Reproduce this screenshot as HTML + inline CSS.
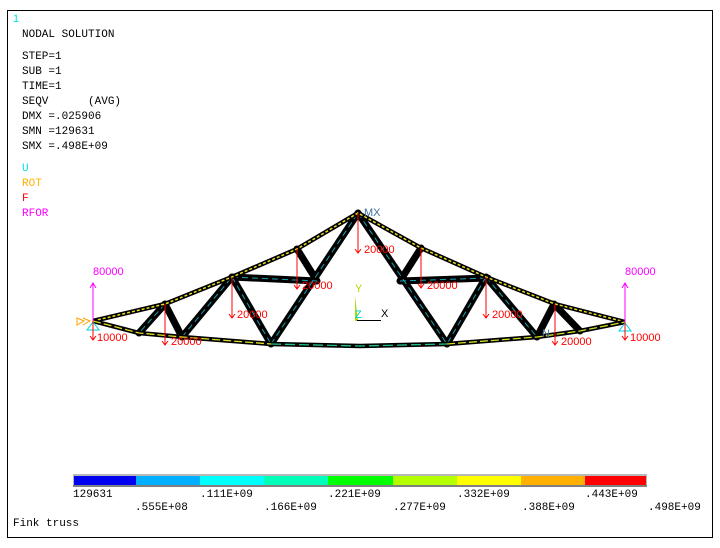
<!DOCTYPE html>
<html><head><meta charset="utf-8"><style>
html,body{margin:0;padding:0;background:#fff;width:720px;height:548px;overflow:hidden}
svg{display:block}
.m{font-family:"Liberation Mono",monospace;font-size:11px;white-space:pre}
.s{font-family:"Liberation Sans",sans-serif;font-size:11px}
</style></head><body>
<svg width="720" height="548" viewBox="0 0 720 548">
<rect x="7.5" y="10.5" width="705" height="527" fill="#fff" stroke="#000" stroke-width="1"/>
<text x="13" y="22" class="s" fill="#00e0e0">1</text>
<g class="m" fill="#000">
<text x="22" y="37">NODAL SOLUTION</text>
<text x="22" y="59">STEP=1</text>
<text x="22" y="74">SUB =1</text>
<text x="22" y="89">TIME=1</text>
<text x="22" y="104" xml:space="preserve">SEQV      (AVG)</text>
<text x="22" y="119">DMX =.025906</text>
<text x="22" y="134">SMN =129631</text>
<text x="22" y="149">SMX =.498E+09</text>
</g>
<text x="22" y="171" class="m" fill="#00e0e0">U</text>
<text x="22" y="186" class="m" fill="#ffb000">ROT</text>
<text x="22" y="201" class="m" fill="#ff0000">F</text>
<text x="22" y="216" class="m" fill="#ff00ff">RFOR</text>

<g stroke="#000" stroke-width="7" stroke-linecap="round" fill="none">
<path d="M165 304L139 333M165 304L182 337M182 337L232 277M232 277L271 344M271 344L358 213M232 277L317 281M297 249L317 281M358 213L447 344M400 281L488 278M421 248L400 281M486 277L447 344M486 277L537 337M537 337L554 304M554 304L580 331"/>
</g>
<g stroke="#1aa0b0" stroke-width="1" stroke-dasharray="6 4" fill="none">
<path d="M165 304L139 333M182 337L232 277M232 277L271 344M271 344L358 213M232 277L317 281M358 213L447 344M400 281L488 278M486 277L447 344M486 277L537 337"/>
</g>
<path d="M93 321L165 304L232 277L297 249L358 213L421 248L486 277L555 304L625 322" stroke="#000" stroke-width="4.5" fill="none"/>
<path d="M93 321L165 304L232 277L297 249L358 213L421 248L486 277L555 304L625 322" stroke="#e8e020" stroke-width="1.5" stroke-dasharray="3 2" fill="none"/>
<path d="M93 321L139 333L182 337L271 344L360 346L447 344L537 337L580 331L625 322" stroke="#000" stroke-width="4.5" fill="none"/>
<path d="M93 321L139 333L182 337L271 344" stroke="#e0e020" stroke-width="1.3" stroke-dasharray="8 3" fill="none"/>
<path d="M271 344L360 346L447 344" stroke="#20c090" stroke-width="1.3" stroke-dasharray="10 4" fill="none"/>
<path d="M447 344L537 337L580 331L625 322" stroke="#d0e020" stroke-width="1.3" stroke-dasharray="8 3" fill="none"/>
<text x="364" y="216" class="s" fill="#4070a0">MX</text>
<text x="542" y="337" class="s" fill="#4070a0">N</text>

<path d="M87 330L93 322L99 330Z" fill="none" stroke="#00d0e0"/>
<path d="M619 331L625 323L631 331Z" fill="none" stroke="#00d0e0"/>
<path d="M77 318L84 321L77 325ZM83 318L90 321L83 325" fill="none" stroke="#ffa000"/>

<g stroke="#ff0000" stroke-width="1" fill="none">
<path d="M93 321V340M90 336L93 340L96 336"/>
<path d="M625 322V340M622 336L625 340L628 336"/>
<path d="M165 304V345M162 341L165 345L168 341"/>
<path d="M232 277V318M229 314L232 318L235 314"/>
<path d="M297 249V289M294 285L297 289L300 285"/>
<path d="M358 213V253M355 249L358 253L361 249"/>
<path d="M421 248V288M418 284L421 288L424 284"/>
<path d="M486 277V318M483 314L486 318L489 314"/>
<path d="M555 304V345M552 341L555 345L558 341"/>
</g>
<g class="s" fill="#ff0000">
<text x="97" y="341">10000</text>
<text x="630" y="341">10000</text>
<text x="171" y="345">20000</text>
<text x="237" y="318">20000</text>
<text x="302" y="289">20000</text>
<text x="364" y="253">20000</text>
<text x="427" y="289">20000</text>
<text x="492" y="318">20000</text>
<text x="561" y="345">20000</text>
</g>
<g stroke="#ff00ff" fill="none">
<path d="M93 321V283M90 288L93 283L96 288"/>
<path d="M625 322V283M622 288L625 283L628 288"/>
</g>
<text x="93" y="275" class="s" fill="#ff00ff">80000</text>
<text x="625" y="275" class="s" fill="#ff00ff">80000</text>

<path d="M355 296V321H358Z" fill="#a0e000"/>
<line x1="357" y1="320.5" x2="381" y2="320.5" stroke="#000"/>
<text x="355" y="292" class="s" fill="#c0d000">Y</text>
<text x="355" y="318" class="s" fill="#00d0d0" font-size="9">Z</text>
<text x="381" y="317" class="s" fill="#000">X</text>

<rect x="73" y="474" width="574" height="13" fill="#b8b8b8"/>
<g>
<rect x="74" y="476" width="62" height="9" fill="#0000f0"/>
<rect x="136" y="476" width="64" height="9" fill="#00b0ff"/>
<rect x="200" y="476" width="64" height="9" fill="#00ffff"/>
<rect x="264" y="476" width="64" height="9" fill="#00ffb8"/>
<rect x="328" y="476" width="65" height="9" fill="#00ff00"/>
<rect x="393" y="476" width="64" height="9" fill="#b4ff00"/>
<rect x="457" y="476" width="64" height="9" fill="#ffff00"/>
<rect x="521" y="476" width="64" height="9" fill="#ffb000"/>
<rect x="585" y="476" width="61" height="9" fill="#ff0000"/>
</g>
<rect x="73" y="485" width="574" height="2" fill="#808080"/>
<g class="m" fill="#000">
<text x="73" y="497">129631</text>
<text x="200" y="497">.111E+09</text>
<text x="328" y="497">.221E+09</text>
<text x="457" y="497">.332E+09</text>
<text x="585" y="497">.443E+09</text>
<text x="135" y="510">.555E+08</text>
<text x="264" y="510">.166E+09</text>
<text x="393" y="510">.277E+09</text>
<text x="522" y="510">.388E+09</text>
<text x="648" y="510">.498E+09</text>
<text x="13" y="526">Fink truss</text>
</g>
</svg>
</body></html>
